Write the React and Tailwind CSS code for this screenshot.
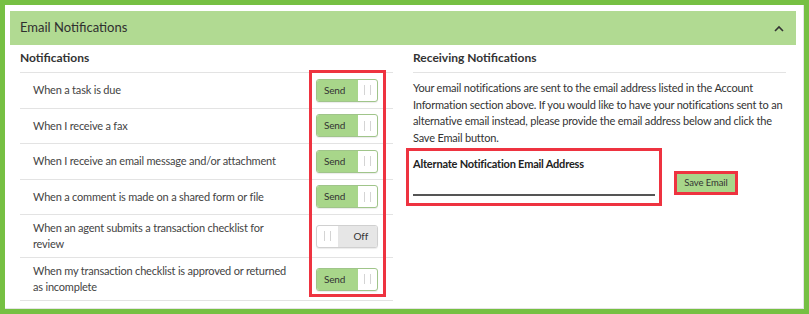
import React from 'react';

const rows = [
  { label: 'When a task is due', on: true },
  { label: 'When I receive a fax', on: true },
  { label: 'When I receive an email message and/or attachment', on: true },
  { label: 'When a comment is made on a shared form or file', on: true },
  { label: 'When an agent submits a transaction checklist for review', on: false, lines: ['When an agent submits a transaction checklist for', 'review'] },
  { label: 'When my transaction checklist is approved or returned as incomplete', on: true, lines: ['When my transaction checklist is approved or returned', 'as incomplete'] },
];

const Grip = () => (
  <div className="flex gap-[5px]">
    <span className="w-px h-[10px] bg-[#d4d4d4]" />
    <span className="w-px h-[10px] bg-[#d4d4d4]" />
  </div>
);

const Toggle = ({ on }) =>
  on ? (
    <div className="flex w-[62px] h-[23px] rounded-[3px] border border-[#a0c58a] overflow-hidden bg-white shadow-[0_1px_1px_rgba(0,0,0,0.08)]">
      <div className="w-[41px] bg-[#a8d68a] flex items-center pl-[7px] text-[10px] tracking-[-0.2px] text-[#333]">Send</div>
      <div className="flex-1 flex items-center justify-center">
        <Grip />
      </div>
    </div>
  ) : (
    <div className="flex w-[62px] h-[23px] rounded-[3px] border border-[#d0d0d0] overflow-hidden bg-white shadow-[0_1px_1px_rgba(0,0,0,0.08)]">
      <div className="w-[21px] flex items-center justify-center">
        <Grip />
      </div>
      <div className="flex-1 bg-[#e6e6e6] flex items-center justify-end pr-[9px] text-[10px] tracking-[-0.2px] text-[#333]">Off</div>
    </div>
  );

export default function App() {
  return (
    <div className="w-[809px] h-[314px] bg-[#76c043] p-[5px] font-['Lato',sans-serif] text-[#333]">
      <div className="relative h-full bg-white border-r border-b border-[#e4e4e4] pt-[6px]">
        <div className="ml-[5px] w-[786px] h-[34px] bg-[#b1da92] flex items-center justify-between pl-[10px] pr-[12px]">
          <span className="text-[13px] text-[#2f2f2f]">Email Notifications</span>
          <svg width="10" height="7" viewBox="0 0 10 7" fill="none" stroke="#333" strokeWidth="1.6">
            <polyline points="1,6 5,2 9,6" />
          </svg>
        </div>

        <div className="flex gap-[20px] pl-[15px]">
          <div className="w-[373px]">
            <div className="h-[28px] flex items-end pb-[5px] border-b border-[#e3e3e3] text-[12px] font-bold text-[#333]">
              Notifications
            </div>
            {rows.map((r) => (
              <div key={r.label} className="min-h-[35.5px] flex items-center justify-between border-b border-[#e3e3e3] pl-[13px] pr-[15px] py-[5px]">
                <div className="text-[11px] tracking-[-0.2px] leading-[16px] text-[#444] whitespace-nowrap">
                  {r.lines ? r.lines.map((l) => <div key={l}>{l}</div>) : r.label}
                </div>
                <Toggle on={r.on} />
              </div>
            ))}
          </div>

          <div className="w-[373px]">
            <div className="h-[28px] flex items-end pb-[5px] border-b border-[#e3e3e3] text-[12px] font-bold text-[#333]">
              Receiving Notifications
            </div>
            <p className="mt-[7px] text-[11px] tracking-[-0.2px] leading-[16.5px] text-[#333] whitespace-nowrap">
              Your email notifications are sent to the email address listed in the Account<br />
              Information section above. If you would like to have your notifications sent to an<br />
              alternative email instead, please provide the email address below and click the<br />
              Save Email button.
            </p>
            <div className="flex items-start -ml-[7px] mt-[2px]">
              <div className="w-[256px] h-[58px] border-[3px] border-[#ee3340] px-[4px] pt-[5px]">
                <div className="text-[11px] leading-[16px] tracking-[-0.2px] font-bold text-[#222]">Alternate Notification Email Address</div>
                <div className="mt-[22px] h-[2px] bg-[#555]" />
              </div>
              <div className="ml-[12px] mt-[23px] border-[3px] border-[#ee3340]">
                <button className="w-[58px] h-[18px] bg-[#a8d68a] text-[9.5px] tracking-[-0.1px] text-[#333] flex items-center justify-center">
                  Save Email
                </button>
              </div>
            </div>
          </div>
        </div>

        <div className="absolute left-[304px] top-[65px] w-[77px] h-[227px] border-[3px] border-[#ee3340] pointer-events-none" />
      </div>
    </div>
  );
}
